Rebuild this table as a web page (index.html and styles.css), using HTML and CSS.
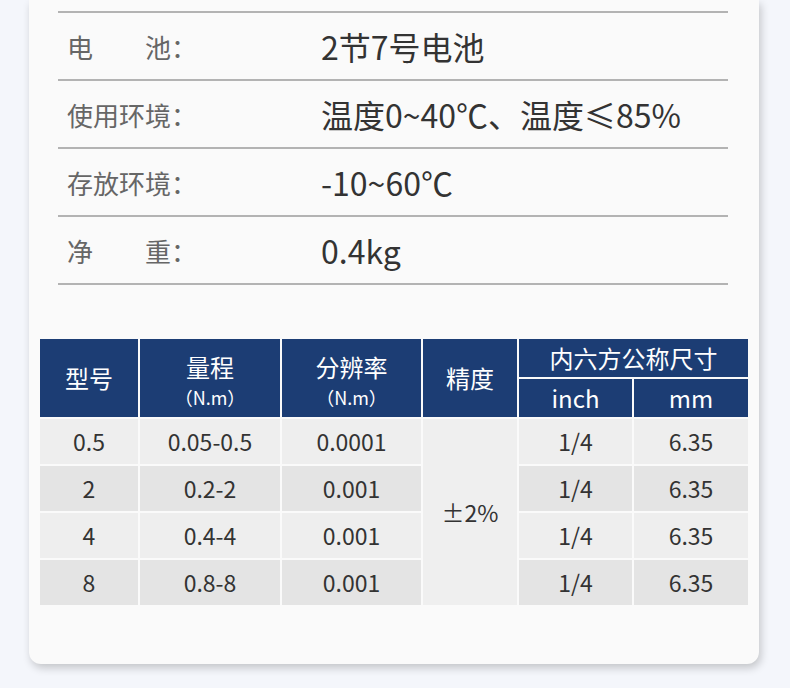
FILE: index.html
```html
<!DOCTYPE html>
<html lang="zh-CN">
<head>
<meta charset="utf-8">
<title>规格参数</title>
<link rel="stylesheet" href="styles.css">
</head>
<body>
<div class="card">
  <div class="specs">
    <div class="spec-row">
      <span class="spec-label">电　　池：</span>
      <span class="spec-value">2节7号电池</span>
    </div>
    <div class="spec-row">
      <span class="spec-label">使用环境：</span>
      <span class="spec-value">温度0~40℃、温度≤85%</span>
    </div>
    <div class="spec-row">
      <span class="spec-label">存放环境：</span>
      <span class="spec-value">-10~60℃</span>
    </div>
    <div class="spec-row">
      <span class="spec-label">净　　重：</span>
      <span class="spec-value">0.4kg</span>
    </div>
  </div>

  <table class="model-table">
    <colgroup>
      <col class="c1"><col class="c2"><col class="c3"><col class="c4"><col class="c5"><col class="c6">
    </colgroup>
    <thead>
      <tr class="head-row">
        <th rowspan="2">型号</th>
        <th rowspan="2" class="th-stack"><span class="th-main">量程</span><span class="th-unit">（N.m）</span></th>
        <th rowspan="2" class="th-stack"><span class="th-main">分辨率</span><span class="th-unit">（N.m）</span></th>
        <th rowspan="2">精度</th>
        <th colspan="2">内六方公称尺寸</th>
      </tr>
      <tr class="head-row">
        <th>inch</th>
        <th>mm</th>
      </tr>
    </thead>
    <tbody>
      <tr class="row-light">
        <td>0.5</td><td>0.05-0.5</td><td>0.0001</td>
        <td rowspan="4" class="merged">±2%</td>
        <td>1/4</td><td>6.35</td>
      </tr>
      <tr class="row-dark">
        <td>2</td><td>0.2-2</td><td>0.001</td><td>1/4</td><td>6.35</td>
      </tr>
      <tr class="row-light">
        <td>4</td><td>0.4-4</td><td>0.001</td><td>1/4</td><td>6.35</td>
      </tr>
      <tr class="row-dark">
        <td>8</td><td>0.8-8</td><td>0.001</td><td>1/4</td><td>6.35</td>
      </tr>
    </tbody>
  </table>
</div>
</body>
</html>
```

FILE: styles.css
```css
html, body {
  margin: 0;
  padding: 0;
}

body {
  background: #f4f6fb;
  font-family: "Noto Sans CJK SC", "Noto Sans", sans-serif;
  width: 790px;
  height: 688px;
  overflow: hidden;
}

.card {
  margin-left: 29px;
  width: 730px;
  box-sizing: border-box;
  padding: 11px 0 57px 0;
  background: #fafafa;
  border-radius: 0 0 12px 12px;
  box-shadow: 2px 4px 9px rgba(0, 0, 0, 0.2);
}

.specs {
  margin: 0 31px 0 29px;
  border-top: 2px solid #b3b3b3;
}

.spec-row {
  display: grid;
  grid-template-columns: 254px 1fr;
  align-items: center;
  height: 66px;
  padding-left: 9px;
  border-bottom: 2px solid #b3b3b3;
}

.spec-label {
  font-size: 26px;
  color: #666666;
  white-space: nowrap;
}

.spec-value {
  font-size: 32px;
  color: #333333;
  white-space: nowrap;
}

.model-table {
  margin: 52px 0 0 9px;
  width: 712px;
  table-layout: fixed;
  border-collapse: separate;
  border-spacing: 2px;
}

.c1 { width: 98px; }
.c2 { width: 140px; }
.c3 { width: 139px; }
.c4 { width: 94px; }
.c5 { width: 113px; }
.c6 { width: 114px; }

.model-table th,
.model-table td {
  padding: 0;
  text-align: center;
  vertical-align: middle;
}

.model-table th {
  background: #1c3d74;
  color: #ffffff;
  font-weight: normal;
  font-size: 24px;
  line-height: 1;
}

.head-row {
  height: 38px;
}

.model-table th.th-stack {
  padding-top: 8px;
}

.th-main {
  display: block;
  line-height: 30px;
}

.th-unit {
  display: block;
  font-size: 18px;
  line-height: 30px;
}

.model-table td {
  height: 45px;
  font-size: 23px;
  color: #333333;
  line-height: 1;
}

.row-light td {
  background: #eeeeee;
}

.row-dark td {
  background: #e4e4e4;
}

.model-table td.merged {
  background: #efefef;
}
```
